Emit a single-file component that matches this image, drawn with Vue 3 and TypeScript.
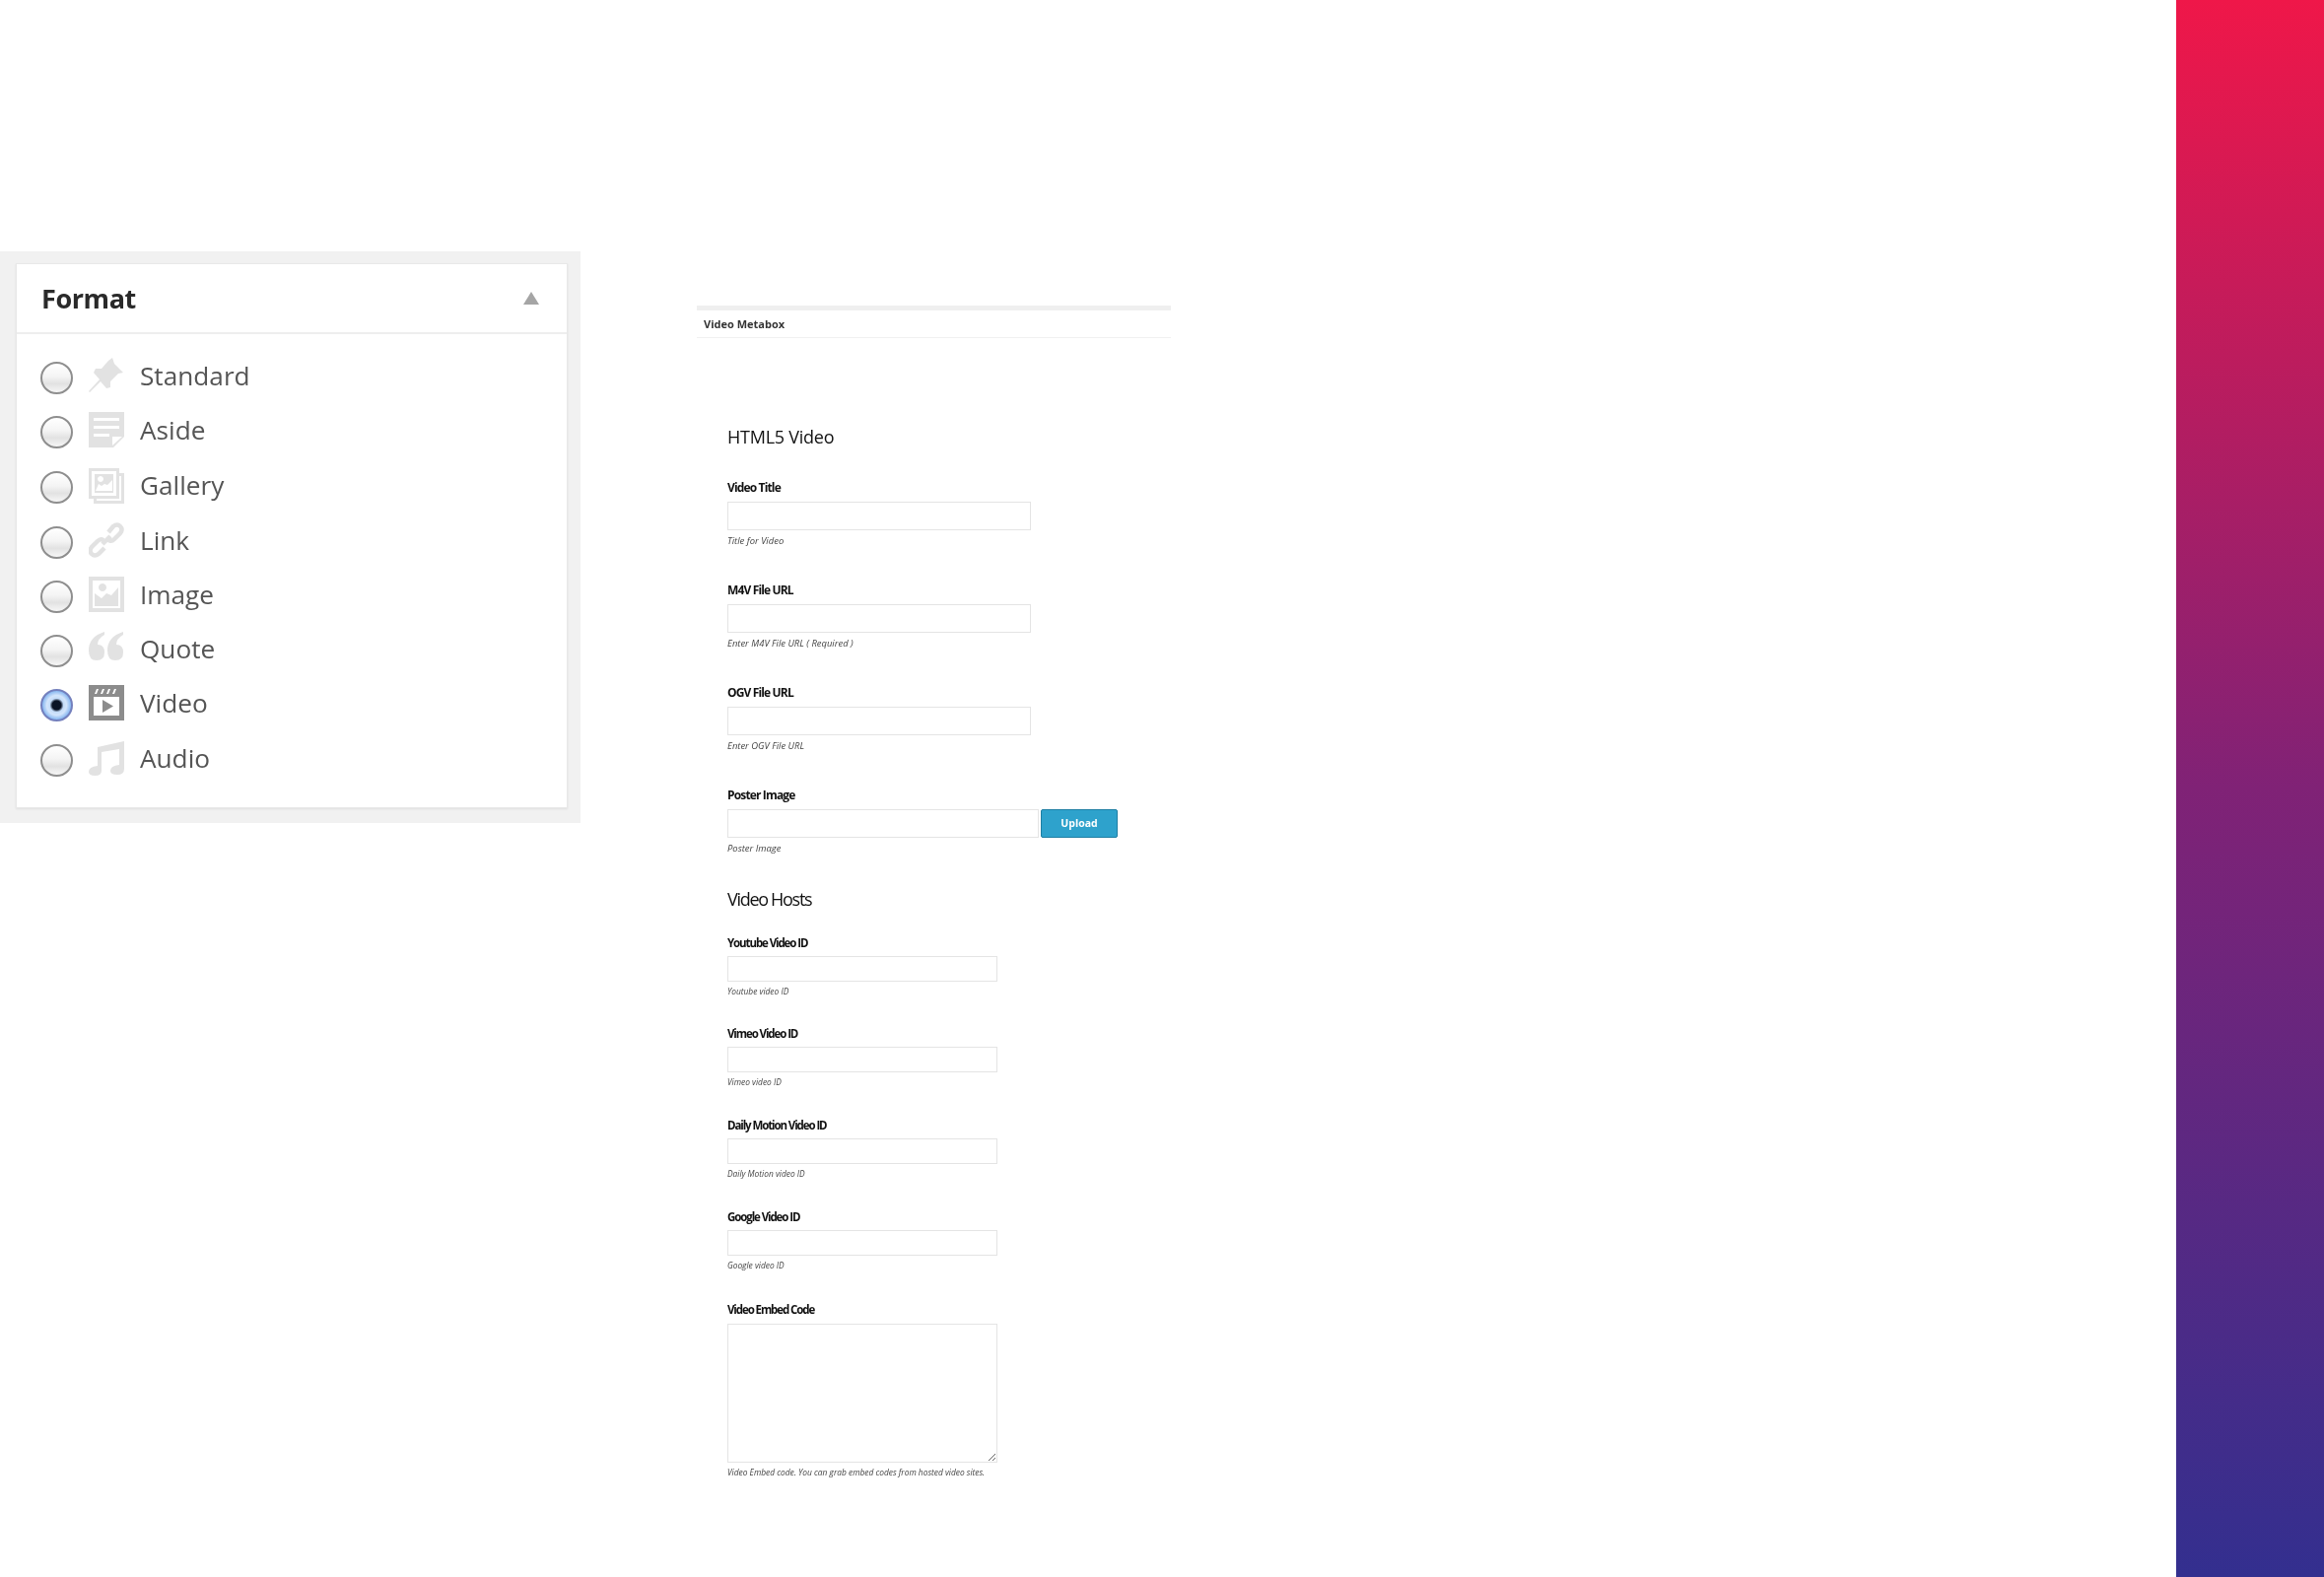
<script setup lang="ts">
interface Fmt { name: string; h: number; checked?: boolean }
const formats: Fmt[] = [
  { name: 'Standard', h: 54 },
  { name: 'Aside', h: 56 },
  { name: 'Gallery', h: 57 },
  { name: 'Link', h: 54 },
  { name: 'Image', h: 56 },
  { name: 'Quote', h: 54 },
  { name: 'Video', h: 56, checked: true },
  { name: 'Audio', h: 56 },
]
const html5 = [
  { label: 'Video Title', hint: 'Title for Video' },
  { label: 'M4V File URL', hint: 'Enter M4V File URL ( Required )' },
  { label: 'OGV File URL', hint: 'Enter OGV File URL' },
]
const hosts = [
  { label: 'Youtube Video ID', hint: 'Youtube video ID' },
  { label: 'Vimeo Video ID', hint: 'Vimeo video ID' },
  { label: 'Daily Motion Video ID', hint: 'Daily Motion video ID' },
  { label: 'Google Video ID', hint: 'Google video ID' },
]
</script>

<template>
  <div class="page">
    <section class="panel">
      <div class="card">
        <header class="card-head">
          <h2>Format</h2>
          <span class="caret"></span>
        </header>
        <ul class="formats">
          <li v-for="f in formats" :key="f.name" class="format" :style="{ height: f.h + 'px' }">
            <input class="radio" type="radio" name="format" :checked="f.checked" />
            <svg class="ico" :class="{ on: f.checked }" viewBox="0 0 36 36" aria-hidden="true">
              <g v-if="f.name === 'Standard'">
                <path d="M24 0l2 6 9 9-5 1-8 8 0 6-4 1-6-7L1 35l-1-1 11-12-6-7 2-4 6 0 7-8z" />
              </g>
              <g v-else-if="f.name === 'Aside'">
                <path fill-rule="evenodd" d="M0 0h36v25L25 36H0zM5 6v3h26V6zM5 14v3h26v-3zM5 22v3h16v-3zM24 34l10-9H24z" />
              </g>
              <g v-else-if="f.name === 'Gallery'">
                <path fill-rule="evenodd" d="M0 0h31v5h5v31H5v-5H0zM3 3v25h25V3zM31 8v23H8v2h25V8zM6 6h19v19H6zM12 8a3 3 0 1 0 .01 0zM7 23h17V12l-5 5-3-1-3 2-3-2z" />
              </g>
              <g v-else-if="f.name === 'Link'">
                <path fill="none" stroke="#e2e2e2" stroke-width="4.5" d="M14 22l8-8M20 10l5-6q4-3 7 0t0 7l-6 6q-3 3-6 1M16 26l-6 6q-4 3-7 0t0-7l6-6q3-3 6-1" />
              </g>
              <g v-else-if="f.name === 'Image'">
                <path fill-rule="evenodd" d="M0 0h36v36H0zM4 4v28h28V4zM6 30V17l7 5 5-5 5 2 7-8v19zM14 7a4 4 0 1 0 .01 0z" />
              </g>
              <g v-else-if="f.name === 'Quote'">
                <path d="M16 1v3Q9 8 9 14q7 0 7 8 0 8-8 8T0 20Q0 6 16 1zM35 1v3q-7 4-7 10 7 0 7 8 0 8-8 8t-8-10q0-14 16-19z" />
              </g>
              <g v-else-if="f.name === 'Video'">
                <path fill-rule="evenodd" d="M0 0h36v36H0zM5 12v19h26V12zM8 4L6 9h2l2-5zM14 4l-2 5h2l2-5zM20 4l-2 5h2l2-5zM26 4l-2 5h2l2-5z" />
                <path d="M14 15l11 6.500L14 28z" />
              </g>
              <g v-else>
                <path d="M9 7l27-6v28q0 6-7 6t-7-4q0-5 9-6V9L13 12v19q0 5-6.500 5T0 32q0-5 9-6z" />
              </g>
            </svg>
            <span class="fmt-label">{{ f.name }}</span>
          </li>
        </ul>
      </div>
    </section>

    <main class="metabox">
      <div class="box-title">Video Metabox</div>
      <div class="box-body">
        <h3 class="sec first">HTML5 Video</h3>
        <div v-for="r in html5" :key="r.label" class="field">
          <label>{{ r.label }}</label>
          <input class="text" type="text" />
          <p>{{ r.hint }}</p>
        </div>
        <div class="field poster">
          <label>Poster Image</label>
          <div class="upload-row">
            <input class="text grow" type="text" />
            <button type="button" class="upload">Upload</button>
          </div>
          <p>Poster Image</p>
        </div>

        <h3 class="sec">Video Hosts</h3>
        <div v-for="r in hosts" :key="r.label" class="field small">
          <label>{{ r.label }}</label>
          <input class="text" type="text" />
          <p>{{ r.hint }}</p>
        </div>
        <div class="field small embed">
          <label>Video Embed Code</label>
          <textarea class="area"></textarea>
          <p>Video Embed code. You can grab embed codes from hosted video sites.</p>
        </div>
      </div>
    </main>

    <aside class="stripe"></aside>
  </div>
</template>

<style>
html, body { margin: 0; background: #fff; }
</style>

<style scoped>
* { box-sizing: border-box; }
.page {
  width: 2358px;
  height: 1600px;
  display: flex;
  overflow: hidden;
  background: #fff;
  font-family: "Open Sans", sans-serif;
}

/* Format panel */
.panel {
  flex: none;
  width: 589px;
  height: 580px;
  margin-top: 255px;
  padding: 12px 13px 15px 16px;
  background: #f1f1f1;
}
.card {
  height: 100%;
  background: #fff;
  border: 1px solid #e8e8e8;
  box-shadow: 0 1px 2px rgba(0, 0, 0, .08);
  filter: blur(.75px);
}
.card-head {
  height: 71px;
  display: flex;
  align-items: center;
  justify-content: space-between;
  padding: 0 28px 0 25px;
  border-bottom: 2px solid #eee;
}
.card-head h2 {
  margin: 0;
  font-size: 27px;
  font-weight: 700;
  color: #2a2a2a;
  letter-spacing: -.4px;
}
.caret {
  width: 0;
  height: 0;
  border-left: 8px solid transparent;
  border-right: 8px solid transparent;
  border-bottom: 13px solid #a5a5a5;
}
.formats {
  list-style: none;
  margin: 0;
  padding: 17px 0 0 24px;
}
.format {
  display: flex;
  align-items: center;
}
.radio {
  appearance: none;
  flex: none;
  width: 33px;
  height: 33px;
  margin: 0 16px 0 0;
  border-radius: 50%;
  border: 2px solid #8e8e8e;
  background: linear-gradient(#fff 0%, #f4f4f4 45%, #e2e2e2 70%, #f6f6f6 100%);
}
.radio:checked {
  border-color: #7480bd;
  background: radial-gradient(circle, #0a1426 0 4.500px, #c4dcf8 7px, #d3e5fb 10px, #7fb2ef 15px);
}
.ico {
  flex: none;
  width: 36px;
  height: 36px;
  margin: -4px 16px 0 0;
  fill: #e2e2e2;
}
.ico.on { fill: #8c8c8c; }
.fmt-label {
  font-size: 26.200px;
  line-height: 36px;
  color: #555;
  margin-top: -5px;
  font-weight: 500;
}

/* Metabox */
.metabox {
  flex: none;
  width: 481px;
  margin: 310px 0 0 118px;
  filter: blur(.4px);
}
.box-title {
  height: 33px;
  padding: 5px 0 0 7px;
  border-top: 5px solid #efefef;
  border-bottom: 1px solid #f1f1f1;
  font-size: 11px;
  line-height: 18px;
  font-weight: 700;
  color: #333;
}
.box-body {
  padding-left: 31px;
}
.sec {
  margin: 0;
  font-size: 18px;
  line-height: 26px;
  font-weight: 400;
  color: #111;
}
.sec.first { margin: 87px 0 0; letter-spacing: -.25px; }
.sec:not(.first) { margin-top: 16.500px; letter-spacing: -1.300px; }

.field {
  margin-top: 20px;
  height: 84px;
}
.sec.first + .field { margin-top: 30.500px; }
.field label {
  display: block;
  height: 22px;
  font-size: 12px;
  line-height: 16px;
  font-weight: 700;
  color: #111;
  letter-spacing: -.85px;
}
.field p {
  margin: 4px 0 0;
  font-size: 9.450px;
  line-height: 14px;
  font-style: italic;
  color: #444;
}
.text {
  display: block;
  width: 308px;
  height: 29px;
  margin: 0;
  padding: 0;
  border: 1.500px solid #e4e4e4;
  border-radius: 0;
  background: #fff;
  outline: none;
}
.upload-row {
  display: flex;
  align-items: stretch;
  gap: 2px;
  width: 396px;
}
.text.grow { width: 316px; flex: none; }
.upload {
  flex: none;
  width: 78px;
  height: 29px;
  padding: 0;
  border: 1px solid #1d7ea3;
  border-radius: 2px;
  background: #2ea2cc;
  color: #fff;
  font-family: inherit;
  font-size: 10.500px;
  font-weight: 700;
}
.field.small {
  height: 72px;
  margin-top: 20.700px;
}
.sec + .field.small { margin-top: 23.500px; }
.field.small.embed { margin-top: 22px; }
.field.small label {
  font-size: 11.500px;
  letter-spacing: -1.100px;
}
.field.small .text {
  width: 274px;
  height: 26px;
  margin-top: -1px;
}
.field.small p {
  font-size: 8.400px;
  line-height: 12px;
  margin-top: 4px;
}
.area {
  display: block;
  width: 274px;
  height: 141px;
  margin: 0;
  padding: 0;
  border: 1.500px solid #e4e4e4;
  border-radius: 0;
  background: #fff;
  outline: none;
}

/* Gradient strip */
.stripe {
  flex: none;
  width: 150px;
  height: 1600px;
  margin-left: auto;
  background: linear-gradient(180deg, #ef1749 0%, #802276 50%, #332f8f 100%);
}
</style>
